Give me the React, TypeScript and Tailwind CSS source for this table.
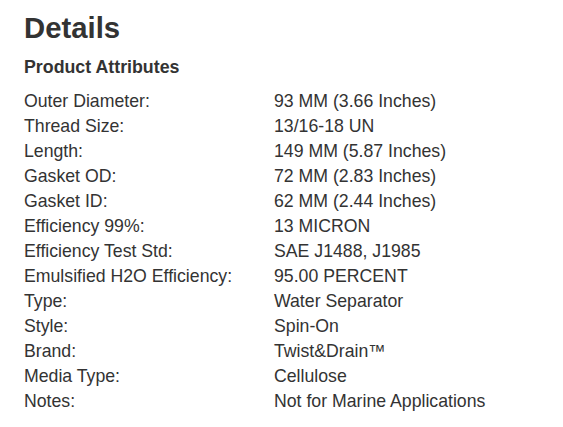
const attributes: [string, string][] = [
  ["Outer Diameter:", "93 MM (3.66 Inches)"],
  ["Thread Size:", "13/16-18 UN"],
  ["Length:", "149 MM (5.87 Inches)"],
  ["Gasket OD:", "72 MM (2.83 Inches)"],
  ["Gasket ID:", "62 MM (2.44 Inches)"],
  ["Efficiency 99%:", "13 MICRON"],
  ["Efficiency Test Std:", "SAE J1488, J1985"],
  ["Emulsified H2O Efficiency:", "95.00 PERCENT"],
  ["Type:", "Water Separator"],
  ["Style:", "Spin-On"],
  ["Brand:", "Twist&Drain\u2122"],
  ["Media Type:", "Cellulose"],
  ["Notes:", "Not for Marine Applications"],
];

export default function App() {
  return (
    <div className="min-h-[427px] w-[563px] bg-white pl-[24px] pt-[10px] text-[#333333] font-['Liberation_Sans',Arial,sans-serif]">
      <h2 className="text-[29.3px] leading-[35px] font-bold">Details</h2>
      <h3 className="mt-[10px] text-[17.8px] leading-[25px] font-bold">Product Attributes</h3>
      <div className="mt-[9px] grid grid-cols-[250px_1fr] text-[17.7px] leading-[25px]">
        {attributes.map(([label, value]) => (
          <div key={label} className="contents">
            <div>{label}</div>
            <div>{value}</div>
          </div>
        ))}
      </div>
    </div>
  );
}
